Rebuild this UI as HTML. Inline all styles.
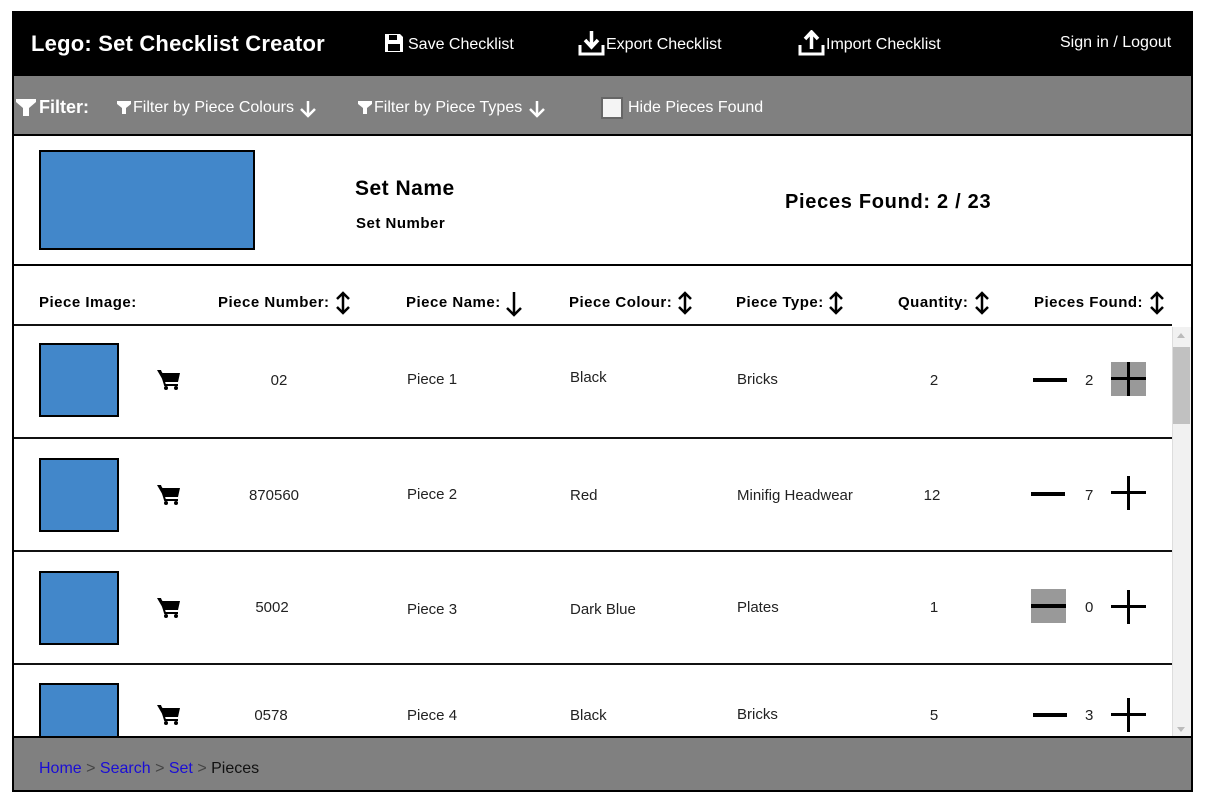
<!DOCTYPE html>
<html><head><meta charset="utf-8"><style>
*{margin:0;padding:0;box-sizing:border-box}
body{width:1208px;height:805px;background:#fff;font-family:"Liberation Sans",Arial,sans-serif;position:relative;overflow:hidden}
.a{position:absolute;white-space:nowrap}
.frame{position:absolute;left:12px;top:11px;width:1181px;height:781px;border:2px solid #000}
.hdr{position:absolute;left:12px;top:11px;width:1181px;height:65px;background:#000}
.flt{position:absolute;left:12px;top:76px;width:1181px;height:60px;background:#808080;border:2px solid #000;border-top:none}
.ftr{position:absolute;left:12px;top:736px;width:1181px;height:56px;background:#808080;border:2px solid #000}
.w{color:#fff}
.hr{position:absolute;left:14px;width:1158px;height:2px;background:#111}
.img{position:absolute;width:80px;height:74px;background:#4287ca;border:2px solid #000}
.t{font-size:15px;color:#222}
.th{font-size:15px;font-weight:bold;color:#000;letter-spacing:0.5px}
.c{text-align:center;width:80px}
</style></head><body>
<div class="frame"></div>
<div class="hdr"></div>
<div class="a w" style="left:31px;top:31px;font-size:22px;font-weight:bold;letter-spacing:0.2px">Lego: Set Checklist Creator</div>
<svg class="a" style="left:384px;top:33px" width="20" height="20" viewBox="0 0 20 20"><path d="M1 1h15l3 3v15H1z" fill="#fff"/><rect x="5" y="2" width="8" height="5" fill="#000"/><rect x="4" y="11" width="12" height="7" fill="#000"/></svg>
<div class="a w" style="left:408px;top:36px;font-size:16px">Save Checklist</div>
<svg class="a" style="left:578px;top:30px" width="28" height="26" viewBox="0 0 28 26"><path d="M2 15v9h23v-9" stroke="#fff" stroke-width="3" fill="none"/><path d="M13.5 1v14M7 10l6.5 7 6.5-7" stroke="#fff" stroke-width="3.5" fill="none"/></svg>
<div class="a w" style="left:606px;top:36px;font-size:16px">Export Checklist</div>
<svg class="a" style="left:798px;top:30px" width="28" height="26" viewBox="0 0 28 26"><path d="M2 15v9h23v-9" stroke="#fff" stroke-width="3" fill="none"/><path d="M13.5 19V4M7 9l6.5-7 6.5 7" stroke="#fff" stroke-width="3.5" fill="none"/></svg>
<div class="a w" style="left:826px;top:36px;font-size:16px">Import Checklist</div>
<div class="a w" style="left:1060px;top:34px;font-size:16px">Sign in / Logout</div>

<div class="flt"></div>
<svg class="a" style="left:16px;top:99px" width="20" height="17" viewBox="0 0 20 17"><path d="M0 0h20v3l-7 6v8h-6v-8L0 3z" fill="#fff"/></svg>
<div class="a w" style="left:39px;top:97px;font-size:18px;font-weight:bold">Filter:</div>
<svg class="a" style="left:117px;top:101px" width="14" height="13" viewBox="0 0 14 13"><path d="M0 0h14v3l-5 4v6H5V7L0 3z" fill="#fff"/></svg>
<div class="a w" style="left:133px;top:99px;font-size:16px">Filter by Piece Colours</div>
<svg class="a" style="left:298px;top:99px" width="20" height="20" viewBox="0 0 20 20"><path d="M10 2v15M3 10l7 7 7-7" stroke="#fff" stroke-width="2.5" fill="none"/></svg>
<svg class="a" style="left:358px;top:101px" width="14" height="13" viewBox="0 0 14 13"><path d="M0 0h14v3l-5 4v6H5V7L0 3z" fill="#fff"/></svg>
<div class="a w" style="left:374px;top:99px;font-size:16px">Filter by Piece Types</div>
<svg class="a" style="left:527px;top:99px" width="20" height="20" viewBox="0 0 20 20"><path d="M10 2v15M3 10l7 7 7-7" stroke="#fff" stroke-width="2.5" fill="none"/></svg>
<div class="a" style="left:601px;top:97px;width:22px;height:22px;background:#f4f4f4;border:2px solid #666"></div>
<div class="a w" style="left:628px;top:99px;font-size:16px">Hide Pieces Found</div>

<div class="a" style="left:39px;top:150px;width:216px;height:100px;background:#4287ca;border:2px solid #000"></div>
<div class="a" style="left:355px;top:177px;font-size:21px;font-weight:bold;letter-spacing:0.5px">Set Name</div>
<div class="a" style="left:356px;top:215px;font-size:15px;font-weight:bold;letter-spacing:0.5px">Set Number</div>
<div class="a" style="left:785px;top:191px;font-size:20px;font-weight:bold;letter-spacing:0.7px">Pieces Found: 2 / 23</div>
<div class="a" style="left:14px;top:264px;width:1177px;height:2px;background:#000"></div>

<div class="a th" style="left:39px;top:294px">Piece Image:</div>
<div class="a th" style="left:218px;top:294px">Piece Number:</div>
<div class="a th" style="left:406px;top:294px">Piece Name:</div>
<div class="a th" style="left:569px;top:294px">Piece Colour:</div>
<div class="a th" style="left:736px;top:294px">Piece Type:</div>
<div class="a th" style="left:898px;top:294px">Quantity:</div>
<div class="a th" style="left:1034px;top:294px">Pieces Found:</div>
<svg width="0" height="0" style="position:absolute"><defs><g id="ud"><path d="M10 3v20M4 9l6-6 6 6M4 17l6 6 6-6" stroke="#000" stroke-width="2.5" fill="none"/></g></defs></svg>
<svg class="a" style="left:333px;top:290px" width="20" height="26"><use href="#ud"/></svg>
<svg class="a" style="left:504px;top:290px" width="20" height="28" viewBox="0 0 20 28"><path d="M10 2v23M3 18l7 7 7-7" stroke="#000" stroke-width="2.5" fill="none"/></svg>
<svg class="a" style="left:675px;top:290px" width="20" height="26"><use href="#ud"/></svg>
<svg class="a" style="left:826px;top:290px" width="20" height="26"><use href="#ud"/></svg>
<svg class="a" style="left:972px;top:290px" width="20" height="26"><use href="#ud"/></svg>
<svg class="a" style="left:1147px;top:290px" width="20" height="26"><use href="#ud"/></svg>

<div class="hr" style="top:324px"></div>
<div class="hr" style="top:437px"></div>
<div class="hr" style="top:550px"></div>
<div class="hr" style="top:663px"></div>

<svg width="0" height="0" style="position:absolute"><defs><g id="cart"><path d="M0 1h4l1 3h18l-2 9H7z" fill="#000"/><path d="M4 3l4 13h13" stroke="#000" stroke-width="2" fill="none"/><circle cx="9" cy="19" r="2" fill="#000"/><circle cx="19" cy="19" r="2" fill="#000"/></g></defs></svg>

<div class="img" style="left:39px;top:343px"></div>
<svg class="a" style="left:157px;top:369px" width="24" height="22"><use href="#cart"/></svg>
<div class="a t c" style="left:239px;top:372px">02</div>
<div class="a t" style="left:407px;top:371px">Piece 1</div>
<div class="a t" style="left:570px;top:369px">Black</div>
<div class="a t" style="left:737px;top:371px">Bricks</div>
<div class="a t c" style="left:894px;top:372px">2</div>
<div class="a" style="left:1033px;top:378px;width:34px;height:4px;background:#000"></div>
<div class="a t" style="left:1085px;top:372px">2</div>
<div class="a" style="left:1111px;top:362px;width:35px;height:34px;background:#999"></div>
<div class="a" style="left:1111px;top:377px;width:35px;height:3px;background:#000"></div>
<div class="a" style="left:1127px;top:362px;width:3px;height:34px;background:#000"></div>

<div class="img" style="left:39px;top:458px"></div>
<svg class="a" style="left:157px;top:484px" width="24" height="22"><use href="#cart"/></svg>
<div class="a t c" style="left:234px;top:487px">870560</div>
<div class="a t" style="left:407px;top:486px">Piece 2</div>
<div class="a t" style="left:570px;top:487px">Red</div>
<div class="a t" style="left:737px;top:487px">Minifig Headwear</div>
<div class="a t c" style="left:892px;top:487px">12</div>
<div class="a" style="left:1031px;top:492px;width:34px;height:4px;background:#000"></div>
<div class="a t" style="left:1085px;top:487px">7</div>
<div class="a" style="left:1111px;top:491px;width:35px;height:3px;background:#000"></div>
<div class="a" style="left:1127px;top:476px;width:3px;height:34px;background:#000"></div>

<div class="img" style="left:39px;top:571px"></div>
<svg class="a" style="left:157px;top:597px" width="24" height="22"><use href="#cart"/></svg>
<div class="a t c" style="left:232px;top:599px">5002</div>
<div class="a t" style="left:407px;top:601px">Piece 3</div>
<div class="a t" style="left:570px;top:601px">Dark Blue</div>
<div class="a t" style="left:737px;top:599px">Plates</div>
<div class="a t c" style="left:894px;top:599px">1</div>
<div class="a" style="left:1031px;top:589px;width:35px;height:34px;background:#999"></div>
<div class="a" style="left:1031px;top:604px;width:35px;height:4px;background:#000"></div>
<div class="a t" style="left:1085px;top:599px">0</div>
<div class="a" style="left:1111px;top:605px;width:35px;height:3px;background:#000"></div>
<div class="a" style="left:1127px;top:590px;width:3px;height:34px;background:#000"></div>

<div class="img" style="left:39px;top:683px;height:60px"></div>
<svg class="a" style="left:157px;top:704px" width="24" height="22"><use href="#cart"/></svg>
<div class="a t c" style="left:231px;top:707px">0578</div>
<div class="a t" style="left:407px;top:707px">Piece 4</div>
<div class="a t" style="left:570px;top:707px">Black</div>
<div class="a t" style="left:737px;top:706px">Bricks</div>
<div class="a t c" style="left:894px;top:707px">5</div>
<div class="a" style="left:1033px;top:713px;width:34px;height:4px;background:#000"></div>
<div class="a t" style="left:1085px;top:707px">3</div>
<div class="a" style="left:1111px;top:713px;width:35px;height:3px;background:#000"></div>
<div class="a" style="left:1127px;top:698px;width:3px;height:34px;background:#000"></div>

<div class="a" style="left:1172px;top:327px;width:19px;height:410px;background:#f1f1f1;border-left:1px solid #ddd"></div>
<div class="a" style="left:1173px;top:347px;width:17px;height:77px;background:#c1c1c1"></div>
<div class="a" style="left:1177px;top:333px;width:0;height:0;border:4px solid transparent;border-bottom:5px solid #bbb;border-top:none"></div>
<div class="a" style="left:1177px;top:727px;width:0;height:0;border:4px solid transparent;border-top:5px solid #bbb;border-bottom:none"></div>

<div class="ftr"></div>
<div class="a" style="left:39px;top:760px;font-size:16px;color:#444"><span style="color:#1a0dd5">Home</span> &gt; <span style="color:#1a0dd5">Search</span> &gt; <span style="color:#1a0dd5">Set</span> &gt; <span style="color:#111">Pieces</span></div>
</body></html>
